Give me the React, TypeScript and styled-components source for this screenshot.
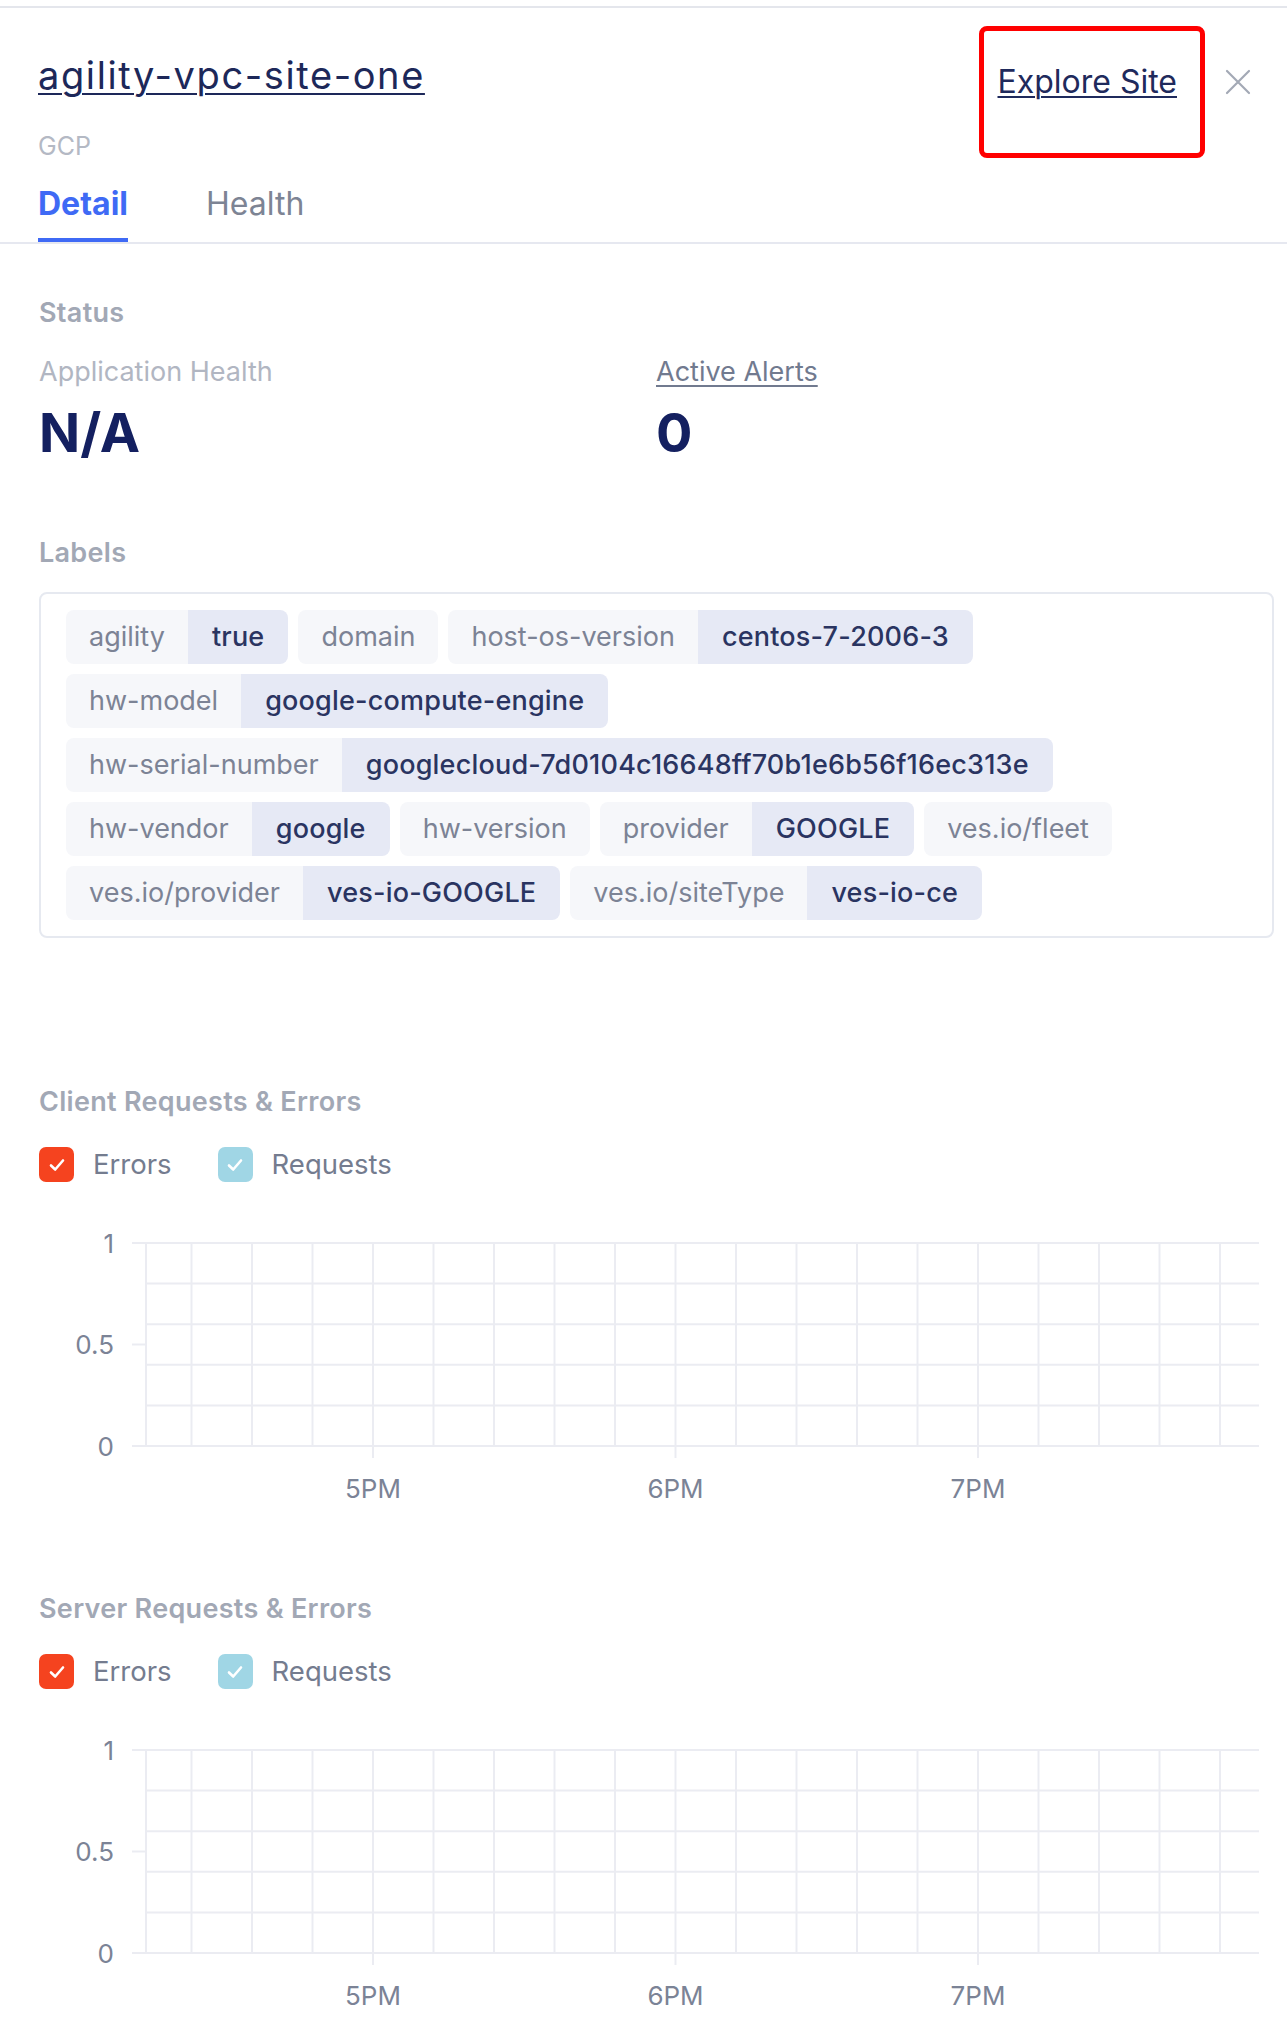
import React from 'react';
import styled, { createGlobalStyle } from 'styled-components';

const GlobalStyle = createGlobalStyle`
  html, body {
    margin: 0;
    padding: 0;
    background: #ffffff;
  }
  body {
    font-family: Inter, "Noto Sans", "Liberation Sans", sans-serif;
    -webkit-font-smoothing: antialiased;
  }
  * {
    box-sizing: border-box;
  }
`;

interface SiteLabel {
  key: string;
  value?: string;
}

const siteLabels: SiteLabel[] = [
  { key: 'agility', value: 'true' },
  { key: 'domain' },
  { key: 'host-os-version', value: 'centos-7-2006-3' },
  { key: 'hw-model', value: 'google-compute-engine' },
  { key: 'hw-serial-number', value: 'googlecloud-7d0104c16648ff70b1e6b56f16ec313e' },
  { key: 'hw-vendor', value: 'google' },
  { key: 'hw-version' },
  { key: 'provider', value: 'GOOGLE' },
  { key: 'ves.io/fleet' },
  { key: 'ves.io/provider', value: 'ves-io-GOOGLE' },
  { key: 'ves.io/siteType', value: 'ves-io-ce' },
];

const Panel = styled.div`
  position: relative;
  width: 1287px;
  margin-top: 6px;
  border-top: 2px solid #e4e6ec;
  padding-bottom: 30px;
`;

const Header = styled.header`
  display: flex;
  justify-content: space-between;
  align-items: flex-start;
  padding: 45px 36px 0 38px;
`;

const TitleBlock = styled.div`
  display: flex;
  flex-direction: column;
`;

const SiteTitle = styled.a`
  font-size: 38px;
  line-height: 44px;
  letter-spacing: 1.6px;
  color: #1d2859;
  text-decoration: underline;
  text-decoration-thickness: 2px;
  text-underline-offset: 4px;
  cursor: pointer;
`;

const Provider = styled.div`
  margin-top: 34px;
  font-size: 25px;
  line-height: 30px;
  color: #b4b9c4;
`;

const Actions = styled.div`
  display: flex;
  align-items: center;
  gap: 48px;
  padding-top: 10px;
`;

const ExploreLink = styled.a`
  font-size: 32px;
  line-height: 38px;
  color: #1f2a5c;
  text-decoration: underline;
  text-decoration-thickness: 2px;
  text-underline-offset: 3px;
  cursor: pointer;
`;

const CloseButton = styled.button`
  display: flex;
  align-items: center;
  justify-content: center;
  width: 26px;
  height: 26px;
  padding: 0;
  border: none;
  background: none;
  color: #a3a9b5;
  cursor: pointer;
`;

const Annotation = styled.div`
  position: absolute;
  top: 18px;
  right: 82px;
  width: 226px;
  height: 132px;
  border: 5px solid #ff0000;
  border-radius: 8px;
  pointer-events: none;
`;

const TabBar = styled.nav`
  display: flex;
  gap: 78px;
  margin-top: 23px;
  padding-left: 38px;
  border-bottom: 2px solid #e6e8f0;
`;

const Tab = styled.div<{ $active?: boolean }>`
  font-size: 32px;
  line-height: 39px;
  padding-bottom: 15px;
  font-weight: ${ props => (props.$active ? 700 : 400) };
  color: ${ props => (props.$active ? '#3f6af5' : '#7d8494') };
  border-bottom: 4px solid ${ props => (props.$active ? '#3f6af5' : 'transparent') };
  cursor: pointer;
`;

const Content = styled.main`
  padding: 53px 13px 0 39px;
`;

const SectionTitle = styled.h4<{ $spaceAbove?: number }>`
  margin: ${ props => props.$spaceAbove || 0 }px 0 0;
  font-size: 27px;
  font-weight: 600;
  line-height: 32px;
  letter-spacing: 0.3px;
  color: #a2a8b5;
`;

const StatusGrid = styled.div`
  display: grid;
  grid-template-columns: 617px 1fr;
  margin-top: 27px;
`;

const Metric = styled.div`
  display: flex;
  flex-direction: column;
  align-items: flex-start;
`;

const MetricLabel = styled.span`
  font-size: 27px;
  line-height: 32px;
  color: #b1b6c2;
`;

const MetricLink = styled.a`
  font-size: 27px;
  line-height: 32px;
  color: #717a8f;
  text-decoration: underline;
  text-decoration-thickness: 2px;
  text-underline-offset: 4px;
  cursor: pointer;
`;

const MetricValue = styled.div`
  margin-top: 15px;
  font-size: 54px;
  font-weight: 700;
  line-height: 60px;
  color: #142060;
`;

const LabelsBox = styled.div`
  display: flex;
  flex-wrap: wrap;
  gap: 10px;
  margin-top: 23px;
  padding: 16px 24px 16px 25px;
  border: 2px solid #e6e9f0;
  border-radius: 8px;
`;

const Chip = styled.div`
  display: flex;
  height: 54px;
  border-radius: 8px;
  overflow: hidden;
  font-size: 27px;
  line-height: 54px;
  white-space: nowrap;
`;

const ChipKey = styled.span`
  padding: 0 23px;
  background: #f6f7fa;
  color: #7c8395;
`;

const ChipValue = styled.span`
  padding: 0 24px;
  background: #e6e9f5;
  color: #2a3461;
  font-weight: 500;
  letter-spacing: 0.2px;
`;

const ChartList = styled.div`
  display: flex;
  flex-direction: column;
  gap: 85px;
  margin-top: 148px;
`;

const ChartSection = styled.section`
  display: flex;
  flex-direction: column;
`;

const Legend = styled.div`
  display: flex;
  gap: 46px;
  margin-top: 29px;
`;

const LegendItem = styled.label`
  display: flex;
  align-items: center;
  gap: 19px;
  font-size: 27.5px;
  line-height: 35px;
  color: #747c8f;
  cursor: pointer;
`;

const CheckBox = styled.span<{ $color: string }>`
  display: flex;
  align-items: center;
  justify-content: center;
  width: 35px;
  height: 35px;
  border-radius: 7px;
  background: ${ props => props.$color };
`;

const ChartSvg = styled.svg`
  display: block;
  margin-top: 44px;
`;

const GRID_LEFT = 107;
const GRID_RIGHT = 1220;
const GRID_TOP = 17;
const GRID_HEIGHT = 203;
const STEP = 60.5;
const HOURS = [
  { x: 334, label: '5PM' },
  { x: 334 + STEP * 5, label: '6PM' },
  { x: 334 + STEP * 10, label: '7PM' },
];
const GRID_COLOR = '#ebecf2';
const AXIS_TEXT = '#7b8396';

const CheckIcon = () => (
  <svg width="20" height="20" viewBox="0 0 20 20">
    <polyline points="4,10.5 8.2,14.5 16,5.5" fill="none" stroke="#ffffff" strokeWidth="2.6" strokeLinecap="round" strokeLinejoin="round" />
  </svg>
);

const CloseIcon = () => (
  <svg width="26" height="26" viewBox="0 0 26 26">
    <path d="M2 2 L24 24 M24 2 L2 24" stroke="currentColor" strokeWidth="2.2" strokeLinecap="round" />
  </svg>
);

const EmptyChart: React.FC = () => {
  const bottom = GRID_TOP + GRID_HEIGHT;
  const vLines = Array.from({ length: 18 }, (_, i) => 334 + (i - 3) * STEP);
  const hLines = Array.from({ length: 6 }, (_, i) => GRID_TOP + (i * GRID_HEIGHT) / 5);
  const yTicks = [
    { y: GRID_TOP, label: '1' },
    { y: GRID_TOP + GRID_HEIGHT / 2, label: '0.5' },
    { y: bottom, label: '0' },
  ];

  return (
    <ChartSvg width="1235" height="282" viewBox="0 0 1235 282">
      {hLines.map(y => (
        <line key={`h${ y }`} x1={GRID_LEFT} x2={GRID_RIGHT} y1={y} y2={y} stroke={GRID_COLOR} strokeWidth="2" />
      ))}
      <line x1={GRID_LEFT} x2={GRID_LEFT} y1={GRID_TOP} y2={bottom} stroke={GRID_COLOR} strokeWidth="2" />
      {vLines.map(x => (
        <line key={`v${ x }`} x1={x} x2={x} y1={GRID_TOP} y2={bottom} stroke={GRID_COLOR} strokeWidth="2" />
      ))}
      {yTicks.map(t => (
        <g key={t.label}>
          <line x1={GRID_LEFT - 14} x2={GRID_LEFT} y1={t.y} y2={t.y} stroke={GRID_COLOR} strokeWidth="2" />
          <text x="75" y={t.y + 9.5} textAnchor="end" fontSize="26" fill={AXIS_TEXT} fontFamily="Inter, sans-serif">
            {t.label}
          </text>
        </g>
      ))}
      {HOURS.map(h => (
        <g key={h.label}>
          <line x1={h.x} x2={h.x} y1={bottom} y2={bottom + 12} stroke={GRID_COLOR} strokeWidth="2" />
          <text x={h.x} y="272" textAnchor="middle" fontSize="26" fill={AXIS_TEXT} fontFamily="Inter, sans-serif">
            {h.label}
          </text>
        </g>
      ))}
    </ChartSvg>
  );
};

const RequestsChart: React.FC<{ title: string }> = ({ title }) => (
  <ChartSection>
    <SectionTitle>{title}</SectionTitle>
    <Legend>
      <LegendItem>
        <CheckBox $color="#f5431f"><CheckIcon /></CheckBox>
        Errors
      </LegendItem>
      <LegendItem>
        <CheckBox $color="#a0d6e5"><CheckIcon /></CheckBox>
        Requests
      </LegendItem>
    </Legend>
    <EmptyChart />
  </ChartSection>
);

const App: React.FC = () => (
  <>
    <GlobalStyle />
    <Panel>
      <Header>
        <TitleBlock>
          <SiteTitle>agility-vpc-site-one</SiteTitle>
          <Provider>GCP</Provider>
        </TitleBlock>
        <Actions>
          <ExploreLink>Explore Site</ExploreLink>
          <CloseButton aria-label="Close"><CloseIcon /></CloseButton>
        </Actions>
      </Header>
      <Annotation />

      <TabBar>
        <Tab $active>Detail</Tab>
        <Tab>Health</Tab>
      </TabBar>

      <Content>
        <SectionTitle>Status</SectionTitle>
        <StatusGrid>
          <Metric>
            <MetricLabel>Application Health</MetricLabel>
            <MetricValue>N/A</MetricValue>
          </Metric>
          <Metric>
            <MetricLink>Active Alerts</MetricLink>
            <MetricValue>0</MetricValue>
          </Metric>
        </StatusGrid>

        <SectionTitle $spaceAbove={74}>Labels</SectionTitle>
        <LabelsBox>
          {siteLabels.map(label => (
            <Chip key={label.key}>
              <ChipKey>{label.key}</ChipKey>
              {label.value && <ChipValue>{label.value}</ChipValue>}
            </Chip>
          ))}
        </LabelsBox>

        <ChartList>
          <RequestsChart title="Client Requests & Errors" />
          <RequestsChart title="Server Requests & Errors" />
        </ChartList>
      </Content>
    </Panel>
  </>
);

export default App;
